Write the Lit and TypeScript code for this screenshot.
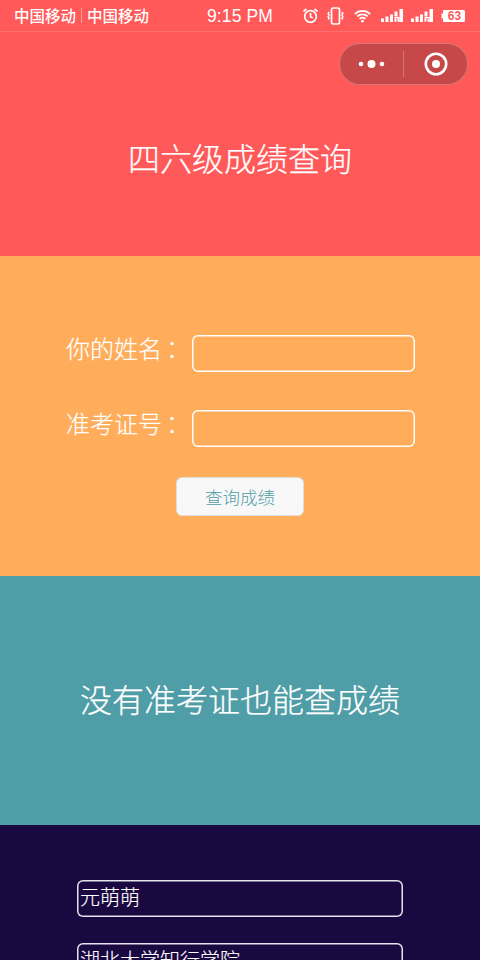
import { LitElement, html, css } from "lit";
import { customElement } from "lit/decorators.js";

const bars = (n: string, cls: string) => html`<svg class=${cls} width="23" height="15" viewBox="0 0 23 15" fill="#fff"><rect x="0" y="10.500" width="3" height="3.500"/><rect x="4.500" y="8.500" width="3" height="5.500"/><rect x="9" y="6.500" width="3" height="7.500"/><rect x="13.500" y="3.500" width="3" height="5"/><rect x="18.500" y="1" width="3.500" height="13"/><rect x="13.500" y="9" width="5" height="5"/><text x="16" y="13.800" font-size="5.500" font-weight="700" font-family="Liberation Sans" text-anchor="middle" fill="#ff5959">${n}</text></svg>`;

@customElement("app-root")
export class AppRoot extends LitElement {
  static styles = css`
    :host { display: block; width: 480px; height: 960px; overflow: hidden; font-family: "Noto Sans CJK SC", sans-serif; color: #fff; position: relative; }
    .red { height: 256px; background: #ff5959; display: flex; flex-direction: column; }
    .status { height: 31px; border-bottom: 1px solid rgba(255,255,255,.12); display: flex; align-items: center; padding: 0 15px 0 14px; flex: none; font-family: "Liberation Sans", "Noto Sans CJK SC", sans-serif; }
    .carrier { font-size: 15.500px; font-weight: 500; width: 62px; white-space: nowrap; position: relative; top: -1px; }
    .sep { width: 1px; height: 15px; background: rgba(255,255,255,.4); margin: 0 5px; }
    .time { font-size: 17.500px; letter-spacing: .1px; margin-left: 58px; white-space: nowrap; position: relative; top: 1px; }
    .icons { margin-left: auto; display: flex; align-items: center; }
    .m7 { margin-left: 7px; }
    .m10 { margin-left: 10px; }
    .m8 { margin-left: 8px; }
    .capsule { position: absolute; left: 339px; top: 43px; width: 129px; height: 42px; box-sizing: border-box; background: rgba(112,48,48,.4); border: 1px solid rgba(255,255,255,.25); border-radius: 21px; display: flex; align-items: center; }
    .cap-l, .cap-r { flex: 1; display: flex; align-items: center; justify-content: center; }
    .cap-sep { width: 1px; height: 26px; background: rgba(255,255,255,.25); }
    .title { flex: 1; display: flex; align-items: center; justify-content: center; font-size: 32px; font-weight: 300; -webkit-text-stroke: .25px #fff; padding-top: 25px; }
    .orange { height: 320px; background: #ffad5a; box-sizing: border-box; padding-top: 79px; display: flex; flex-direction: column; align-items: center; }
    .row { width: 349px; margin-left: 1px; display: flex; align-items: center; justify-content: space-between; margin-bottom: 38px; }
    .row label { font-size: 24px; font-weight: 300; -webkit-text-stroke: .2px #fff; line-height: 30px; position: relative; top: -6px; }
    .colon { font-family: "Noto Sans CJK TC", sans-serif; position: relative; top: 1px; left: -2px; }
    .box { box-sizing: border-box; box-shadow: inset 0 0 0 1.500px #fff; border-radius: 6px; }
    .row .box { width: 223px; height: 37px; }
    button { width: 128px; height: 39px; margin-top: -8px; box-sizing: border-box; padding: 0; border: 1px solid #ddd; border-radius: 6px; background: #f8f8f8; color: #4f9da6; font-size: 17.500px; font-weight: 300; font-family: inherit; }
    .teal { height: 249px; background: #4f9da6; display: flex; align-items: center; justify-content: center; font-size: 32px; font-weight: 300; -webkit-text-stroke: .25px #fff; padding-bottom: 6px; box-sizing: border-box; }
    .dark { height: 135px; background: #1a0841; box-sizing: border-box; padding: 55px 77px 0; display: flex; flex-direction: column; gap: 26px; flex: none; }
    .dark .box { height: 37px; flex: none; font-size: 20px; font-weight: 300; -webkit-text-stroke: .15px #fff; line-height: 34px; padding-left: 3px; box-shadow: inset 0 0 0 1.500px #e6e4ec; }
  `;

  render() {
    return html`
      <div class="red">
        <div class="status">
          <span class="carrier">中国移动</span><span class="sep"></span><span class="carrier">中国移动</span>
          <span class="time">9:15 PM</span>
          <span class="icons">
            <svg width="17" height="17" viewBox="0 0 17 17" fill="none" stroke="#fff" stroke-width="1.700"><circle cx="8.500" cy="9.500" r="5.800"/><path d="M8.500 6v3.700l2.200 1.200M1.500 4.500 4.500 2M15.500 4.500 12.500 2"/></svg>
            <svg class="m8" width="17" height="18" viewBox="0 0 17 18" fill="none" stroke="#fff" stroke-width="1.300"><rect x="4.500" y="1" width="8" height="16" rx="1.500" stroke-width="1.700"/><path d="M2.200 5 1 6.500 2.200 8 1 9.500 2.200 11 1 12.500M14.800 5 16 6.500 14.800 8 16 9.500 14.800 11 16 12.500"/></svg>
            <svg class="m10" width="17" height="14" viewBox="0 0 19 15" fill="none" stroke="#fff" stroke-width="2"><path d="M1 5.300a12 12 0 0 1 17 0M3.700 8a8.200 8.200 0 0 1 11.600 0M6.300 10.700a4.500 4.500 0 0 1 6.400 0"/><circle cx="9.500" cy="13.300" r="1.500" fill="#fff" stroke="none"/></svg>
            ${bars("1", "m10")}
            ${bars("2", "m7")}
            <svg class="m7" width="24" height="14" viewBox="0 0 24 14"><path d="M3 1h19.500a1.500 1.500 0 0 1 1.500 1.500v9a1.500 1.500 0 0 1-1.500 1.500H3a1 1 0 0 1-1-1V9.500H.5v-5H2V2a1 1 0 0 1 1-1z" fill="#fff"/><text x="13.500" y="11.300" font-size="12" font-family="Liberation Sans" font-weight="700" text-anchor="middle" fill="#ff5959">63</text></svg>
          </span>
        </div>
        <div class="title">四六级成绩查询</div>
      </div>
      <div class="capsule">
        <span class="cap-l"><svg width="28" height="10" viewBox="0 0 28 10" fill="#fff"><circle cx="3" cy="5" r="2.300"/><circle cx="13.500" cy="5" r="4"/><circle cx="24" cy="5" r="2.300"/></svg></span>
        <span class="cap-sep"></span>
        <span class="cap-r"><svg width="24" height="24" viewBox="0 0 24 24" fill="none"><circle cx="12" cy="12" r="10.200" stroke="#fff" stroke-width="2.600"/><circle cx="12" cy="12" r="4" fill="#fff"/></svg></span>
      </div>
      <div class="orange">
        <div class="row"><label>你的姓名<span class="colon">：</span></label><div class="box"></div></div>
        <div class="row"><label>准考证号<span class="colon">：</span></label><div class="box"></div></div>
        <button>查询成绩</button>
      </div>
      <div class="teal">没有准考证也能查成绩</div>
      <div class="dark">
        <div class="box">元萌萌</div>
        <div class="box">湖北大学知行学院</div>
      </div>
    `;
  }
}
